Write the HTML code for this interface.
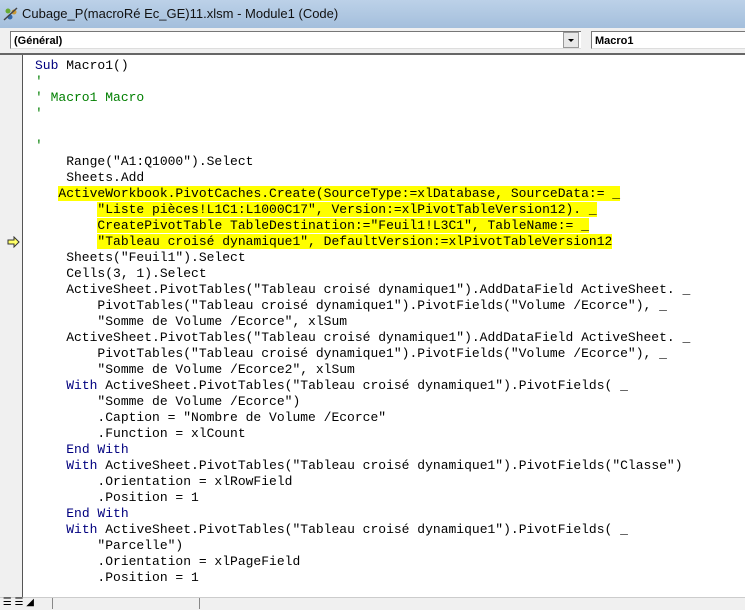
<!DOCTYPE html>
<html><head><meta charset="utf-8"><style>
body{margin:0;width:745px;height:609px;overflow:hidden;background:#fff;position:relative;font-family:"Liberation Sans",sans-serif}
.title{position:absolute;left:0;top:0;width:745px;height:28px;background:linear-gradient(#bcd1e8,#a4bfdc);}
.title span{position:absolute;left:22px;top:6px;font-size:13px;color:#111}
.bar{position:absolute;left:0;top:28px;width:745px;height:25px;background:#f0f0f0}
.cb{position:absolute;top:31px;height:18px;background:#fff;border-top:1px solid #777;border-left:1px solid #777;border-bottom:1px solid #ddd;font-size:11px;font-weight:bold;line-height:18px;padding-left:3px;box-sizing:border-box}
.btn{position:absolute;left:563px;top:32px;width:16px;height:16px;background:#e8e8e8;border:1px solid #999;box-sizing:border-box}
.code{position:absolute;left:0;top:53px;width:745px;height:544px;border-top:2px solid #666;box-sizing:border-box}
.gut{position:absolute;left:0;top:55px;width:22px;height:542px;background:#f0f0f0;border-right:1px solid #555}
pre{position:absolute;left:35px;top:58px;margin:0;font-family:"Liberation Mono",monospace;font-size:13px;line-height:16px;color:#000}
.k{color:#00007f}.c{color:#007f00}.h{background:#ffff00}
.sb{position:absolute;left:0;top:597px;width:745px;height:12px;background:#f0f0f0;border-top:1px solid #ccc}
</style></head><body>
<div class="title"><svg style="position:absolute;left:3px;top:6px" width="16" height="16"><circle cx="5" cy="5" r="2.5" fill="#6a3"/><circle cx="11" cy="6" r="2.5" fill="#c93"/><circle cx="7" cy="11" r="2.5" fill="#36a"/><path d="M1 14 L14 2" stroke="#444" stroke-width="1.5"/></svg><span>Cubage_P(macroRé Ec_GE)11.xlsm - Module1 (Code)</span></div>
<div class="bar"></div>
<div class="cb" style="left:10px;width:571px">(Général)</div>
<div class="btn"><svg width="14" height="14"><path d="M4 6h6l-3 3z" fill="#000"/></svg></div>
<div class="cb" style="left:591px;width:154px">Macro1</div>
<div class="code"></div>
<div class="gut"></div>
<svg style="position:absolute;left:7px;top:236px" width="14" height="12"><path d="M1 4h6V1l5 5-5 5V8H1z" fill="#ffff66" stroke="#333" stroke-width="1"/></svg>
<pre><span class="k">Sub</span> Macro1()
<span class="c">'</span>
<span class="c">' Macro1 Macro</span>
<span class="c">'</span>

<span class="c">'</span>
    Range("A1:Q1000").Select
    Sheets.Add
   <span class="h">ActiveWorkbook.PivotCaches.Create(SourceType:=xlDatabase, SourceData:= _</span>
        <span class="h">"Liste pièces!L1C1:L1000C17", Version:=xlPivotTableVersion12). _</span>
        <span class="h">CreatePivotTable TableDestination:="Feuil1!L3C1", TableName:= _</span>
        <span class="h">"Tableau croisé dynamique1", DefaultVersion:=xlPivotTableVersion12</span>
    Sheets("Feuil1").Select
    Cells(3, 1).Select
    ActiveSheet.PivotTables("Tableau croisé dynamique1").AddDataField ActiveSheet. _
        PivotTables("Tableau croisé dynamique1").PivotFields("Volume /Ecorce"), _
        "Somme de Volume /Ecorce", xlSum
    ActiveSheet.PivotTables("Tableau croisé dynamique1").AddDataField ActiveSheet. _
        PivotTables("Tableau croisé dynamique1").PivotFields("Volume /Ecorce"), _
        "Somme de Volume /Ecorce2", xlSum
    <span class="k">With</span> ActiveSheet.PivotTables("Tableau croisé dynamique1").PivotFields( _
        "Somme de Volume /Ecorce")
        .Caption = "Nombre de Volume /Ecorce"
        .Function = xlCount
    <span class="k">End With</span>
    <span class="k">With</span> ActiveSheet.PivotTables("Tableau croisé dynamique1").PivotFields("Classe")
        .Orientation = xlRowField
        .Position = 1
    <span class="k">End With</span>
    <span class="k">With</span> ActiveSheet.PivotTables("Tableau croisé dynamique1").PivotFields( _
        "Parcelle")
        .Orientation = xlPageField
        .Position = 1</pre>
<div class="sb"><div style="position:absolute;left:0;top:0;width:52px;height:11px;border-right:1px solid #888;font-size:10px;line-height:10px">&nbsp;☰ ☰ ◢</div><div style="position:absolute;left:54px;top:0;width:145px;height:11px;border-right:1px solid #888"></div></div>
</body></html>
